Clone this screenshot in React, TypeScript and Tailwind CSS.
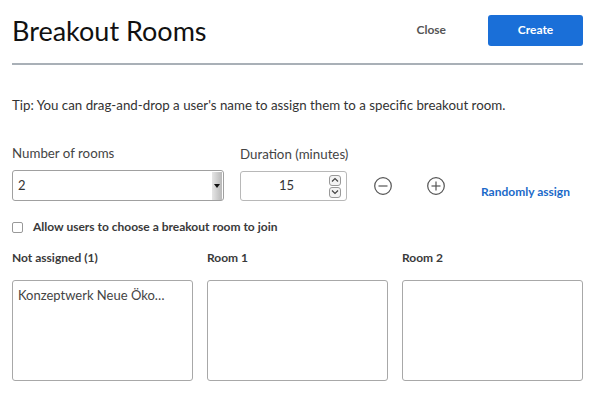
import React from "react";

const FONT = { fontFamily: "Lato, 'Open Sans', sans-serif" };

function CircleIcon({ plus }: { plus?: boolean }) {
  return (
    <svg width="20" height="20" viewBox="0 0 20 20" fill="none" stroke="#555" strokeWidth="1.2">
      <circle cx="10" cy="10" r="8.3" />
      <path d="M5.5 10h9" />
      {plus && <path d="M10 5.5v9" />}
    </svg>
  );
}

function Spinner() {
  return (
    <div className="flex flex-col gap-[1px]">
      <div className="w-[12px] h-[11px] rounded-[3px] border border-[#999] bg-[#f3f3f3] flex items-center justify-center">
        <svg width="8" height="6" viewBox="0 0 8 6" fill="none" stroke="#444" strokeWidth="1.2">
          <path d="M1 4.5l3-3 3 3" />
        </svg>
      </div>
      <div className="w-[12px] h-[11px] rounded-[3px] border border-[#999] bg-[#f3f3f3] flex items-center justify-center">
        <svg width="8" height="6" viewBox="0 0 8 6" fill="none" stroke="#444" strokeWidth="1.2">
          <path d="M1 1.5l3 3 3-3" />
        </svg>
      </div>
    </div>
  );
}

function RoomColumn({ title, children }: { title: string; children?: React.ReactNode }) {
  return (
    <div className="flex flex-col min-w-0">
      <div className="text-[12px] font-bold text-[#3a3a3a] h-[20px] leading-[20px]">{title}</div>
      <div className="mt-[12px] h-[101px] rounded-[3px] border border-[#a8a8a8] px-[5px] pt-[5px] text-[13px] text-[#444] truncate">
        {children}
      </div>
    </div>
  );
}

export default function App() {
  return (
    <div className="w-[601px] h-[412px] bg-white overflow-hidden" style={FONT}>
      <div className="ml-[12px] w-[571px]">
        <div className="flex items-center h-[60px]">
          <h1 className="text-[27px] text-[#111] leading-none">Breakout Rooms</h1>
          <button className="ml-auto mr-[42px] text-[12px] font-bold text-[#555]">Close</button>
          <button className="w-[95px] h-[31px] rounded-[3px] bg-[#1a6fd8] text-white text-[12px] font-bold">
            Create
          </button>
        </div>
        <div className="h-[2px] bg-[#a9b0b7] mt-[3px]" />
        <p className="mt-[30px] text-[13.3px] text-[#333] leading-[20px] whitespace-nowrap">
          Tip: You can drag-and-drop a user's name to assign them to a specific breakout room.
        </p>
        <div className="mt-[28px] flex items-end">
          <div className="flex flex-col w-[212px]">
            <label className="text-[13.3px] text-[#444] leading-[20px] whitespace-nowrap">Number of rooms</label>
            <div className="mt-[7px] h-[31px] rounded-[3px] border border-[#a0a0a0] flex items-center pl-[5px] text-[13px] text-[#333]">
              <span>2</span>
              <div className="ml-auto mr-[1px] h-[28px] w-[10px] bg-gradient-to-r from-[#e6e6e6] to-[#b8b8b8] flex items-center justify-center">
                <svg width="6" height="4" viewBox="0 0 6 4">
                  <path d="M0 0h6L3 4z" fill="#111" />
                </svg>
              </div>
            </div>
          </div>
          <div className="flex flex-col ml-[16px] w-[107px]">
            <label className="text-[13.3px] text-[#444] leading-[20px] whitespace-nowrap">Duration (minutes)</label>
            <div className="mt-[7px] h-[30px] rounded-[3px] border border-[#b8b8b8] flex items-center text-[13px] text-[#333]">
              <span className="flex-1 text-center pl-[3px]">15</span>
              <div className="mr-[5px]">
                <Spinner />
              </div>
            </div>
          </div>
          <div className="h-[31px] flex items-center ml-[26px]">
            <CircleIcon />
          </div>
          <div className="h-[31px] flex items-center ml-[33px]">
            <CircleIcon plus />
          </div>
          <div className="h-[31px] flex items-center ml-[35px] pt-[12px]">
            <span className="text-[12px] font-bold text-[#1b6ac9] whitespace-nowrap">Randomly assign</span>
          </div>
        </div>
        <div className="mt-[17px] flex items-center">
          <div className="w-[11px] h-[11px] rounded-[2px] border border-[#999] bg-white" />
          <span className="ml-[10px] text-[12px] font-bold text-[#3a3a3a]">
            Allow users to choose a breakout room to join
          </span>
        </div>
        <div className="mt-[12px] grid grid-cols-3 gap-[14px]">
          <RoomColumn title="Not assigned (1)">Konzeptwerk Neue Öko…</RoomColumn>
          <RoomColumn title="Room 1" />
          <RoomColumn title="Room 2" />
        </div>
      </div>
    </div>
  );
}
